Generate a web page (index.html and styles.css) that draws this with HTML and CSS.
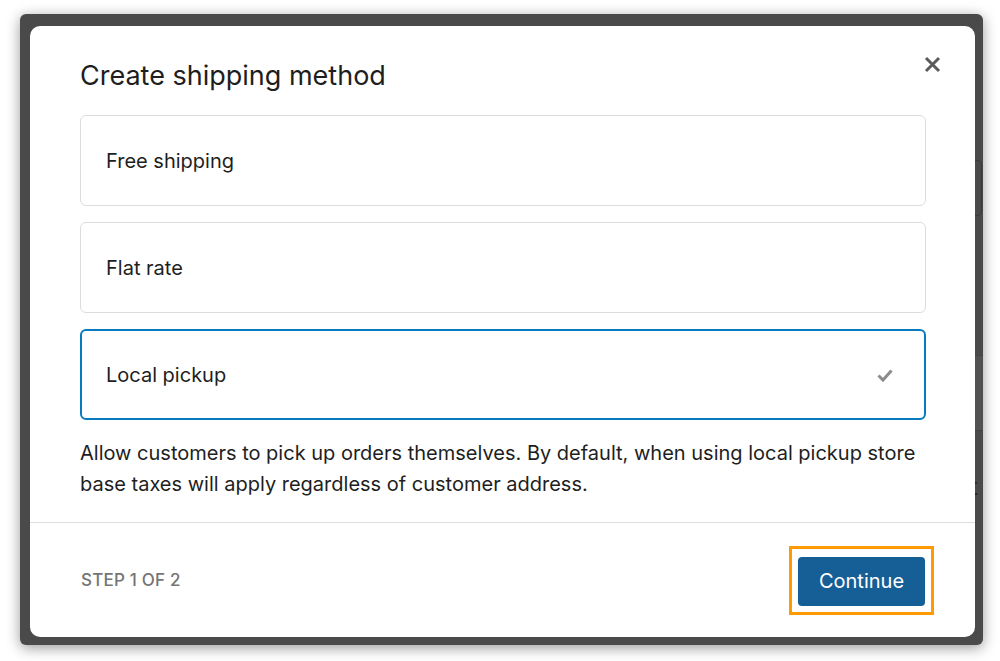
FILE: index.html
```html
<!DOCTYPE html>
<html lang="en">
<head>
<meta charset="utf-8">
<title>Create shipping method</title>
<link rel="stylesheet" href="styles.css">
</head>
<body>
<div class="screen">
  <div class="backdrop">
    <div class="page-layer">
      <div class="bg-card"></div>
      <div class="bg-band"></div>
      <div class="bg-text">t</div>
    </div>
    <div class="modal" role="dialog" aria-labelledby="modal-title">
      <div class="modal-body">
        <div class="modal-header">
          <h1 id="modal-title" class="modal-title">Create shipping method</h1>
          <button class="close-btn" aria-label="Close">
            <svg width="17" height="17" viewBox="0 0 17 17"><path d="M2 2L15 15M15 2L2 15" stroke="#5b5b5b" stroke-width="3" stroke-linecap="butt"/></svg>
          </button>
        </div>
        <div class="options">
          <div class="option">Free shipping</div>
          <div class="option">Flat rate</div>
          <div class="option option-selected">
            <span>Local pickup</span>
            <svg class="check" width="16" height="15" viewBox="0 0 16 15"><path d="M1.5 7.5L6 12L14.5 2.5" fill="none" stroke="#8c8c8c" stroke-width="3"/></svg>
          </div>
        </div>
        <p class="description">Allow customers to pick up orders themselves. By default, when using local pickup store base taxes will apply regardless of customer address.</p>
      </div>
      <div class="modal-footer">
        <span class="step">STEP 1 OF 2</span>
        <span class="highlight">
          <button class="continue-btn">Continue</button>
        </span>
      </div>
    </div>
  </div>
</div>
</body>
</html>
```
FILE: styles.css
```css
* { box-sizing: border-box; }
html, body { margin: 0; padding: 0; background: #ffffff; }
body { font-family: Inter, "Noto Sans", "Liberation Sans", sans-serif; color: #1e1e1e; }

.screen {
  width: 1000px;
  height: 661px;
  padding: 14px 17px 16px 20px;
}

.backdrop {
  width: 963px;
  height: 631px;
  background: #4a4a4a;
  border-radius: 6px;
  box-shadow: 0 3px 14px rgba(0, 0, 0, 0.4);
  display: grid;
  grid-template-columns: 1fr;
  grid-template-rows: 1fr;
  overflow: hidden;
}

.page-layer {
  grid-area: 1 / 1;
  display: flex;
  flex-direction: column;
  align-items: flex-end;
}
.bg-card {
  margin-top: 146px;
  width: 20px;
  height: 56px;
  margin-right: 1px;
  border: 1px solid #3a3a3a;
  border-radius: 5px;
}
.bg-band {
  margin-top: 139px;
  width: 20px;
  height: 76px;
  background: #525252;
  border-top: 1px solid #444;
  border-bottom: 1px solid #444;
}
.bg-text {
  margin-top: 40px;
  width: 14px;
  font-size: 24px;
  line-height: 30px;
  color: #222;
  font-family: "Noto Sans", sans-serif;
}

.modal {
  grid-area: 1 / 1;
  margin: 12px 8px 8px 10px;
  background: #ffffff;
  border-radius: 10px;
  display: flex;
  flex-direction: column;
  overflow: hidden;
}

.modal-body {
  padding: 0 49px 0 50px;
}

.modal-header {
  display: flex;
  justify-content: space-between;
  align-items: flex-start;
  height: 89px;
}

.modal-title {
  margin: 32px 0 0 0;
  font-size: 27px;
  line-height: 36px;
  font-weight: 400;
  color: #1e1e1e;
}

.close-btn {
  margin: 30px -15px 0 0;
  padding: 0;
  border: 0;
  background: transparent;
  width: 17px;
  height: 17px;
  display: flex;
}

.options {
  display: flex;
  flex-direction: column;
  gap: 16px;
}

.option {
  height: 91px;
  border: 1px solid #dcdcdc;
  border-radius: 6px;
  padding: 0 32px 0 25px;
  display: flex;
  align-items: center;
  justify-content: space-between;
  font-size: 20px;
  color: #1e1e1e;
}

.option-selected {
  border: 2px solid #087ac0;
  padding: 0 31px 0 24px;
}

.check { display: block; margin-top: 2px; }

.description {
  margin: 18px 0 0 0;
  font-size: 20px;
  line-height: 31px;
  color: #1e1e1e;
}

.modal-footer {
  margin-top: 22px;
  border-top: 1px solid #dedede;
  flex: 1;
  display: flex;
  align-items: center;
  justify-content: space-between;
  padding: 0 41px 0 51px;
}

.step {
  font-size: 17px;
  font-weight: 500;
  color: #757575;
  letter-spacing: 0.2px;
}

.highlight {
  display: flex;
  border: 3px solid #ff9a00;
  padding: 8px 6px 6px 6px;
}

.continue-btn {
  width: 127px;
  height: 49px;
  background: #165e96;
  color: #ffffff;
  border: 0;
  border-radius: 4px;
  font-family: Inter, "Noto Sans", sans-serif;
  font-size: 20px;
}
```
